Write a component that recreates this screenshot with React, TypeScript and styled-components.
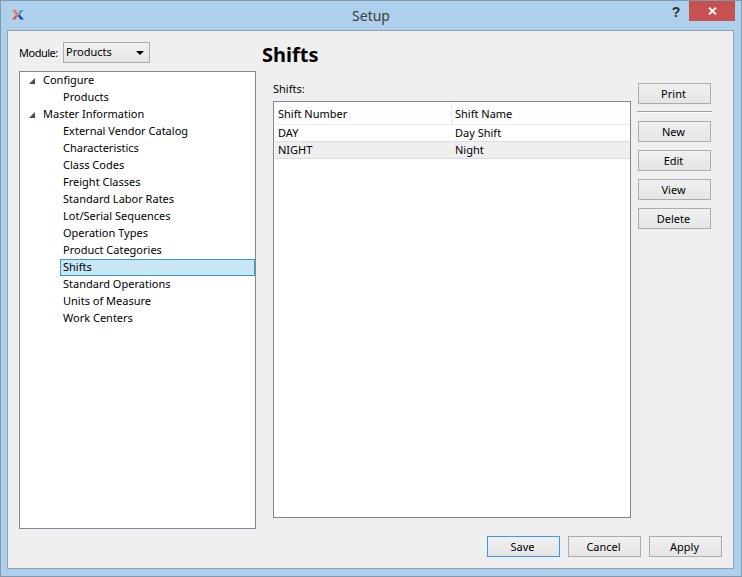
import React, { FC, ReactNode } from 'react';
import styled, { createGlobalStyle } from 'styled-components';

const GlobalStyle = createGlobalStyle`
  html, body {
    margin: 0;
    padding: 0;
    background: #aed0ec;
  }
  body {
    font-family: "Noto Sans", "Open Sans", sans-serif;
    font-size: 11px;
    color: #000;
  }
`;

const Window = styled.div`
  box-sizing: border-box;
  width: 742px;
  height: 577px;
  display: flex;
  flex-direction: column;
  background: #aed0ec;
  border: 1px solid #8198ad;
  padding: 0 7px 7px 6px;
`;
const TitleBar = styled.div`
  height: 29px;
  flex: none;
  display: grid;
  grid-template-columns: 30px 1fr 30px 45px;
  align-items: start;
`;
const Logo = styled.div`
  padding: 9px 0 0 5px;
  line-height: 0;
`;
const Title = styled.div`
  text-align: center;
  font-size: 14px;
  line-height: 30px;
  color: #3d3d3d;
  padding-left: 46px;
`;
const Help = styled.div`
  font-family: "Liberation Sans", sans-serif;
  font-weight: 700;
  font-size: 14px;
  line-height: 22px;
  color: #2c2c2c;
  text-align: center;
  padding-left: 4px;
`;
const CloseBox = styled.div`
  height: 20px;
  margin-right: -1px;
  background: #c75050;
  display: flex;
  align-items: center;
  justify-content: center;
  line-height: 0;
`;
const Client = styled.div`
  flex: 1;
  min-height: 0;
  display: flex;
  flex-direction: column;
  background: #efefef;
  border: 1px solid #8fa3b6;
  padding: 11px;
`;
const Main = styled.div`
  flex: 1;
  min-height: 0;
  display: grid;
  grid-template-columns: 237px 1fr;
  column-gap: 17px;
`;
const LeftColumn = styled.div`
  display: flex;
  flex-direction: column;
  gap: 8px;
  min-height: 0;
`;
const ModuleRow = styled.div`
  display: flex;
  align-items: center;
  gap: 7px;
  height: 21px;
`;
const ModuleLabel = styled.span`
  width: 37px;
  letter-spacing: -0.5px;
  white-space: nowrap;
`;
const Select = styled.div`
  box-sizing: border-box;
  width: 87px;
  height: 21px;
  border: 1px solid #acacac;
  background: linear-gradient(#f0f0f0, #e5e5e5);
  display: flex;
  align-items: center;
  justify-content: space-between;
  padding: 0 4px 2px 2px;
`;
const Caret = styled.span`
  width: 0;
  height: 0;
  border-left: 4px solid transparent;
  border-right: 4px solid transparent;
  border-top: 4px solid #000;
  margin: 2px 1px 0 0;
`;
const Tree = styled.div`
  flex: 1;
  box-sizing: border-box;
  background: #fff;
  border: 1px solid #828790;
  padding: 0 0 0 1px;
`;
const TreeRow = styled.div<{ $depth: number; $selected?: boolean }>`
  box-sizing: border-box;
  height: 17px;
  line-height: 13px;
  border: 1px solid ${(p) => (p.$selected ? '#3399d8' : 'transparent')};
  background: ${(p) => (p.$selected ? '#c9e6f5' : 'transparent')};
  margin-left: ${(p) => (p.$depth === 1 ? '39px' : '0')};
  padding: 0 0 2px ${(p) => (p.$depth === 1 ? '2px' : '7px')};
  display: flex;
  align-items: center;
  gap: 8px;
  white-space: nowrap;
`;
const Expander = styled.span`
  width: 0;
  height: 0;
  margin-top: 2px;
  border-left: 6px solid transparent;
  border-bottom: 6px solid #4a4a4a;
`;
const RightColumn = styled.div`
  display: grid;
  grid-template-columns: 358px 73px;
  column-gap: 7px;
  grid-template-rows: 41px 1fr;
  min-height: 0;
`;
const Heading = styled.h1`
  grid-column: 1 / 3;
  margin: 0 0 0 -11px;
  font-size: 20px;
  line-height: 26px;
  font-weight: 700;
  color: #000;
`;
const TableColumn = styled.div`
  display: flex;
  flex-direction: column;
  min-height: 0;
  padding-bottom: 11px;
`;
const TableLabel = styled.div`
  height: 18px;
  line-height: 11px;
`;
const Table = styled.div`
  flex: 1;
  background: #fff;
  border: 1px solid #828790;
  padding-left: 1px;
`;
const TableHead = styled.div`
  display: grid;
  grid-template-columns: 177px 1fr;
  height: 23px;
  box-sizing: border-box;
  background: #fdfdfd;
  border-bottom: 1px solid #e2effb;
`;
const HeadCell = styled.div<{ $first?: boolean }>`
  line-height: 23px;
  padding-left: 3px;
  border-right: ${(p) => (p.$first ? '1px solid #e5eef7' : 'none')};
`;
const TableRow = styled.div<{ $alt?: boolean }>`
  display: grid;
  grid-template-columns: 177px 1fr;
  height: 17px;
  box-sizing: border-box;
  line-height: 15px;
  background: ${(p) => (p.$alt ? '#efefef' : '#fff')};
  border-bottom: 1px solid #dcdcdc;
`;
const Cell = styled.div`
  padding-left: 3px;
`;
const ButtonColumn = styled.div`
  display: flex;
  flex-direction: column;
`;
const Button = styled.button<{ $default?: boolean }>`
  box-sizing: border-box;
  width: 73px;
  height: 21px;
  padding: 0 2px 0 0;
  margin: 0 0 8px;
  font: inherit;
  color: #000;
  line-height: 17px;
  border: 1px solid ${(p) => (p.$default ? '#3399ff' : '#acacac')};
  border-radius: 0;
  background: linear-gradient(#f0f0f0, #e5e5e5);
`;
const Separator = styled.div`
  width: 75px;
  margin: -1px 0 8px -1px;
  height: 2px;
  box-sizing: border-box;
  border-top: 1px solid #a0a0a0;
  border-bottom: 1px solid #fff;
`;
const Footer = styled.div`
  flex: none;
  display: flex;
  justify-content: flex-end;
  gap: 8px;
  padding-top: 7px;
  height: 21px;
`;

const treeItems: { label: string; depth: number; selected?: boolean }[] = [
  { label: 'Configure', depth: 0 },
  { label: 'Products', depth: 1 },
  { label: 'Master Information', depth: 0 },
  { label: 'External Vendor Catalog', depth: 1 },
  { label: 'Characteristics', depth: 1 },
  { label: 'Class Codes', depth: 1 },
  { label: 'Freight Classes', depth: 1 },
  { label: 'Standard Labor Rates', depth: 1 },
  { label: 'Lot/Serial Sequences', depth: 1 },
  { label: 'Operation Types', depth: 1 },
  { label: 'Product Categories', depth: 1 },
  { label: 'Shifts', depth: 1, selected: true },
  { label: 'Standard Operations', depth: 1 },
  { label: 'Units of Measure', depth: 1 },
  { label: 'Work Centers', depth: 1 },
];

const AppLogo: FC = () => (
  <svg width="12" height="10" viewBox="0 0 12 10">
    <path d="M0 0 L3.5 0 L6.5 4 L4.5 5.5 Z" fill="#ef7f3c" />
    <path d="M0 9.5 L4 4.8 L5.5 6 L3 9.5 Z" fill="#d9463e" />
    <path d="M11.5 0 L8.5 0 L6 3.4 L7.5 5 Z" fill="#4c94d6" />
    <path d="M12 9.5 L8.5 9.5 L5.5 5.8 L7.5 4.5 Z" fill="#1d4b98" />
  </svg>
);

const TreeLine: FC<{ depth: number; selected?: boolean; children: ReactNode }> = ({
  depth,
  selected,
  children,
}) => (
  <TreeRow $depth={depth} $selected={selected}>
    {depth === 0 && <Expander />}
    <span>{children}</span>
  </TreeRow>
);

const App: FC = () => (
  <>
    <GlobalStyle />
    <Window>
      <TitleBar>
        <Logo>
          <AppLogo />
        </Logo>
        <Title>Setup</Title>
        <Help>?</Help>
        <CloseBox>
          <svg width="9" height="8" viewBox="0 0 9 8">
            <path d="M1 0.5 L8 7.5 M8 0.5 L1 7.5" stroke="#fff" strokeWidth="1.8" />
          </svg>
        </CloseBox>
      </TitleBar>
      <Client>
        <Main>
          <LeftColumn>
            <ModuleRow>
              <ModuleLabel>Module:</ModuleLabel>
              <Select>
                <span>Products</span>
                <Caret />
              </Select>
            </ModuleRow>
            <Tree>
              {treeItems.map((item) => (
                <TreeLine key={item.label} depth={item.depth} selected={item.selected}>
                  {item.label}
                </TreeLine>
              ))}
            </Tree>
          </LeftColumn>
          <RightColumn>
            <Heading>Shifts</Heading>
            <TableColumn>
              <TableLabel>Shifts:</TableLabel>
              <Table>
                <TableHead>
                  <HeadCell $first>Shift Number</HeadCell>
                  <HeadCell>Shift Name</HeadCell>
                </TableHead>
                <TableRow>
                  <Cell>DAY</Cell>
                  <Cell>Day Shift</Cell>
                </TableRow>
                <TableRow $alt>
                  <Cell>NIGHT</Cell>
                  <Cell>Night</Cell>
                </TableRow>
              </Table>
            </TableColumn>
            <ButtonColumn>
              <Button>Print</Button>
              <Separator />
              <Button>New</Button>
              <Button>Edit</Button>
              <Button>View</Button>
              <Button>Delete</Button>
            </ButtonColumn>
          </RightColumn>
        </Main>
        <Footer>
          <Button $default>Save</Button>
          <Button>Cancel</Button>
          <Button>Apply</Button>
        </Footer>
      </Client>
    </Window>
  </>
);

export default App;
